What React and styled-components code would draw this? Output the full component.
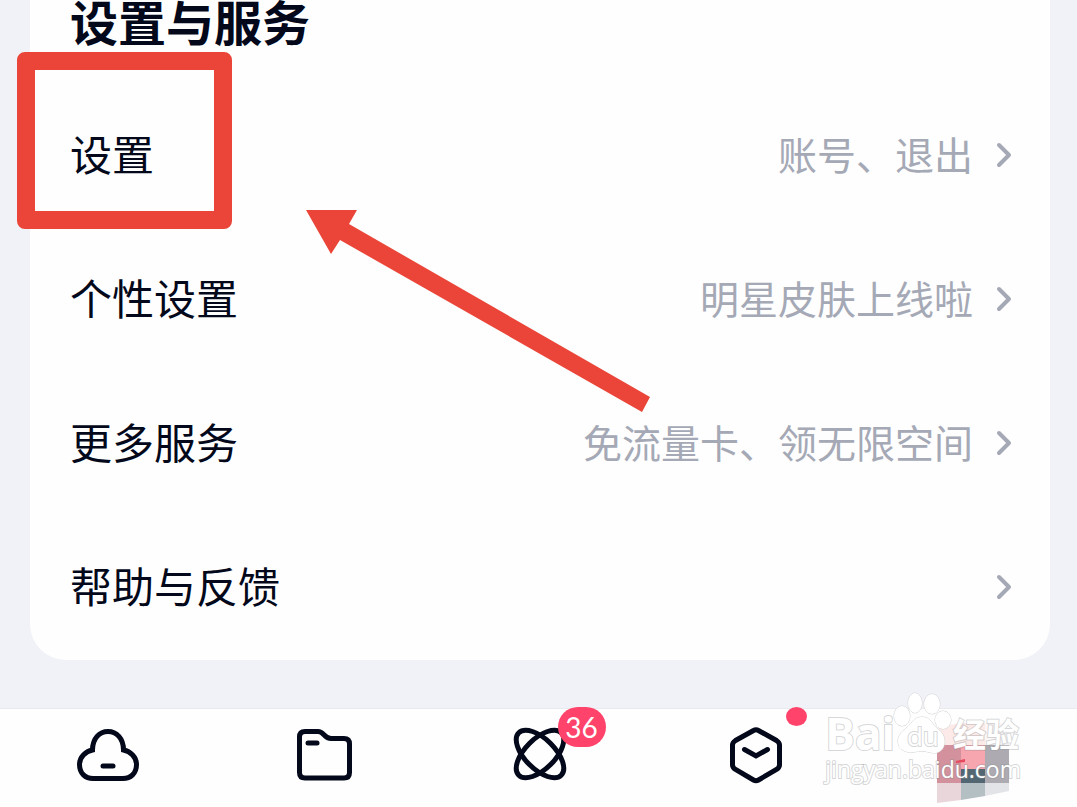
import React from 'react'
import styled, { createGlobalStyle } from 'styled-components'

const color = {
    page: '#f1f2f7',
    card: '#fefefe',
    front: '#03081a',
    front2: '#a5a9b6',
    mark: '#ea4538',
    badge: '#ff436a',
    line: '#e9eaee',
    outline: 'rgba(140, 142, 146, 0.36)'
}

const GlobalStyle = createGlobalStyle`
    * {
        box-sizing: border-box;
    }
    body {
        margin: 0;
        background-color: ${color.page};
        color: ${color.front};
        font-family: 'Noto Sans CJK SC', sans-serif;
    }
`

const rows = [
    { title: '设置', note: '账号、退出' },
    { title: '个性设置', note: '明星皮肤上线啦' },
    { title: '更多服务', note: '免流量卡、领无限空间' },
    { title: '帮助与反馈', note: '' }
]

export default function App() {
    return (
        <Page>
            <GlobalStyle />
            <Main>
                <Card>
                    <Heading>设置与服务</Heading>
                    {rows.map(row => (
                        <Row key={row.title} href="#">
                            <RowTitle>{row.title}</RowTitle>
                            <RowNote>{row.note}</RowNote>
                            <Chevron />
                        </Row>
                    ))}
                    <Highlight />
                    <Arrow />
                </Card>
            </Main>
            <TabBar>
                <Tab aria-label="网盘">
                    <CloudIcon />
                </Tab>
                <Tab aria-label="文件">
                    <FolderIcon />
                </Tab>
                <Tab aria-label="共享">
                    <TabIcon>
                        <OrbitIcon />
                        <Badge>36</Badge>
                    </TabIcon>
                </Tab>
                <Tab aria-label="福利">
                    <TabIcon>
                        <BoxIcon />
                        <Dot />
                    </TabIcon>
                </Tab>
                <Tab aria-label="我的">
                    <Avatar />
                </Tab>
                <Watermark>
                    <Brand>
                        <BrandText>Bai</BrandText>
                        <PawMark>
                            <Paw />
                            <PawText>du</PawText>
                        </PawMark>
                        <BrandChinese>经验</BrandChinese>
                    </Brand>
                    <Site>jingyan.baidu.com</Site>
                </Watermark>
            </TabBar>
        </Page>
    )
}

function Chevron() {
    return (
        <ChevronSvg viewBox="0 0 18 28">
            <path d="M3 3l10 10L3 23" />
        </ChevronSvg>
    )
}

function Arrow() {
    return (
        <ArrowSvg viewBox="0 0 344 203">
            <path d="M0 0H51L43 14L344 187L336 202L34 30L25 44Z" />
        </ArrowSvg>
    )
}

function CloudIcon() {
    return (
        <Icon viewBox="0 0 64 64">
            <path d="M16.5 27C16.500 15.500 23.500 8.500 32 8.500S47.500 15.500 47.500 27C54.500 28.500 60.500 34 60.500 41.500C60.500 50.500 54.500 55.500 47 55.500H17C9.500 55.500 3.500 50.500 3.500 41.500C3.500 34 9.500 28.500 16.500 27Z" />
            <path d="M27 43h10" />
        </Icon>
    )
}

function FolderIcon() {
    return (
        <Icon viewBox="0 0 64 64">
            <path d="M14 8.500H27C33 8.500 33 15.500 40 15.500H53Q58.500 15.500 58.500 21V49.500Q58.500 55 53 55H14Q8.500 55 8.500 49.500V14Q8.500 8.500 14 8.500Z" />
            <path d="M17 20h9" />
        </Icon>
    )
}

function OrbitIcon() {
    return (
        <Icon viewBox="0 0 64 64">
            <ellipse cx="33" cy="31" rx="30" ry="15" transform="rotate(45 33 31)" />
            <ellipse cx="33" cy="31" rx="30" ry="15" transform="rotate(-45 33 31)" />
        </Icon>
    )
}

function BoxIcon() {
    return (
        <Icon viewBox="0 0 64 64">
            <path d="M31.5 7.500Q34 6 36.5 7.500L54.500 17.500Q57.500 19.500 57.500 22V42Q57.500 44.500 54.500 46.500L36.500 57Q34 58.500 31.500 57L13.500 46.500Q10.500 44.500 10.500 42V22Q10.500 19.500 13.500 17.500Z" />
            <path d="M22.500 26.500L34 33L45.500 26.500" />
        </Icon>
    )
}

function Avatar() {
    return (
        <AvatarSvg viewBox="-8 4 80 80">
            <path fill="#fbeae7" d="M0 10Q20 2 48 4V26H0Z" />
            <path fill="#fbf7f7" d="M48 4H68V26H48Z" />
            <path fill="#d2919d" d="M0 26H24V64H0Z" />
            <path fill="#f7a5ae" d="M24 26H48V50H24Z" />
            <path fill="#adabb1" d="M48 26H72V64H48Z" />
            <path fill="#526772" d="M24 50H48V64H24Z" />
            <path fill="#e9d6da" d="M0 64H24V81L0 84Z" />
            <path fill="#b4bfc4" d="M24 64H48V77L24 81Z" />
            <path fill="#e3e4e8" d="M48 64H72V72L48 77Z" />
            <path fill="#e64a5f" d="M19 42L28 40V43L19 44Z" />
        </AvatarSvg>
    )
}

function Paw() {
    return (
        <PawSvg viewBox="0 0 60 66">
            <ellipse cx="9" cy="27" rx="8" ry="10" />
            <ellipse cx="22" cy="14" rx="7" ry="10" />
            <ellipse cx="39" cy="15" rx="8" ry="10" />
            <ellipse cx="50" cy="31" rx="8" ry="9" />
            <path d="M29 28C38 28 39 36 46 41C55 48 53 63 42 64C36 64 34 62 29 62S20 64 15 63C3 61 2 48 11 41C18 36 20 28 29 28Z" />
        </PawSvg>
    )
}

const Page = styled.div`
    display: flex;
    flex-direction: column;
    min-height: 100vh;
    overflow: hidden;
`

const Main = styled.main`
    flex: 1;
    padding: 0 27px 48px 30px;
`

const Card = styled.section`
    position: relative;
    padding: 0 36px 0 40px;
    border-radius: 0 0 36px 36px;
    background-color: ${color.card};
`

const Heading = styled.h1`
    margin: 0;
    height: 84px;
    font-size: 48px;
    font-weight: 700;
    line-height: 40px;
`

const Row = styled.a`
    display: flex;
    align-items: center;
    height: 144px;
    color: inherit;
    text-decoration: none;
`

const RowTitle = styled.span`
    flex: 1;
    padding-bottom: 6px;
    font-size: 42px;
    line-height: 60px;
`

const RowNote = styled.span`
    margin-right: 23px;
    padding-bottom: 6px;
    color: ${color.front2};
    font-size: 39px;
    line-height: 60px;
`

const ChevronSvg = styled.svg`
    width: 18px;
    height: 28px;
    fill: none;
    stroke: ${color.front2};
    stroke-width: 4;
    stroke-linecap: round;
    stroke-linejoin: round;
`

const Highlight = styled.div`
    position: absolute;
    top: 52px;
    left: -13px;
    width: 215px;
    height: 177px;
    border: 18px solid ${color.mark};
    border-radius: 8px;
    pointer-events: none;
`

const ArrowSvg = styled.svg`
    position: absolute;
    top: 210px;
    left: 276px;
    width: 344px;
    height: 203px;
    fill: ${color.mark};
    pointer-events: none;
`

const TabBar = styled.nav`
    position: relative;
    display: flex;
    height: 99px;
    border-top: 1px solid ${color.line};
    background-color: ${color.card};
`

const Tab = styled.button`
    flex: 1;
    display: flex;
    justify-content: center;
    align-items: flex-start;
    padding: 14px 0 0;
    border: 0;
    background: none;
    color: inherit;
    font: inherit;
`

const TabIcon = styled.span`
    position: relative;
    display: flex;
`

const Icon = styled.svg`
    width: 64px;
    height: 64px;
    fill: none;
    stroke: currentColor;
    stroke-width: 5;
    stroke-linecap: round;
`

const Badge = styled.span`
    position: absolute;
    top: -16px;
    left: 51px;
    width: 48px;
    height: 40px;
    border-radius: 20px;
    background-color: ${color.badge};
    color: #fff;
    font-family: Lato, sans-serif;
    font-size: 28px;
    line-height: 40px;
    text-align: center;
`

const Dot = styled.span`
    position: absolute;
    top: -16px;
    left: 64px;
    width: 21px;
    height: 19px;
    border-radius: 50%;
    background-color: ${color.badge};
`

const AvatarSvg = styled.svg`
    width: 80px;
    height: 80px;
`

const Watermark = styled.div`
    position: absolute;
    right: 56px;
    bottom: 24px;
    color: #fff;
    pointer-events: none;
    paint-order: stroke fill;
    -webkit-text-stroke: 2px ${color.outline};
`

const Brand = styled.div`
    display: flex;
    align-items: flex-end;
    height: 66px;
    line-height: 44px;
`

const BrandText = styled.span`
    font-family: 'Open Sans', sans-serif;
    font-size: 44px;
    font-weight: 700;
`

const PawMark = styled.span`
    position: relative;
    display: flex;
    margin-left: -2px;
`

const PawSvg = styled.svg`
    width: 60px;
    height: 66px;
    fill: #fff;
    stroke: #d0d2d4;
    stroke-width: 1;
`

const PawText = styled.span`
    position: absolute;
    top: 27px;
    left: 14px;
    font-family: 'Open Sans', sans-serif;
    font-size: 26px;
    line-height: 40px;
`

const BrandChinese = styled.span`
    font-size: 33px;
    font-weight: 700;
`

const Site = styled.div`
    font-family: 'Open Sans', sans-serif;
    font-size: 23px;
    line-height: 28px;
`
